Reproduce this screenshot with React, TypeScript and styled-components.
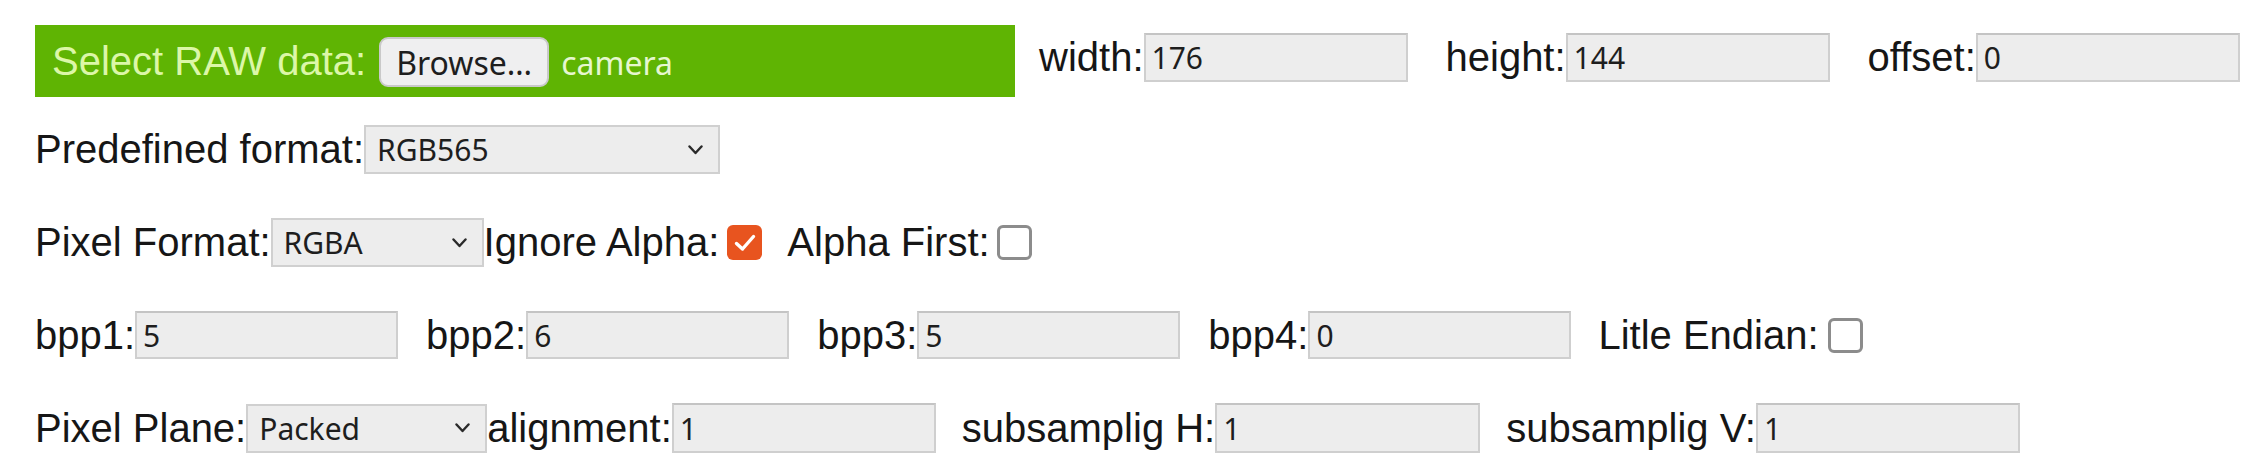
import React from "react";
import styled, { createGlobalStyle } from "styled-components";

const Global = createGlobalStyle`
  html, body { margin: 0; padding: 0; background: #ffffff; }
  body { font-family: "Liberation Sans", Arial, sans-serif; color: #161616; }
`;

const Page = styled.div`
  display: flex;
  flex-direction: column;
  padding: 25px 0 0 35px;
  width: 2243px;
  height: 466px;
  box-sizing: border-box;
  overflow: hidden;
`;

const Row = styled.div<{ $top?: number; $align?: string; $h: number }>`
  display: flex;
  align-items: ${(p) => p.$align || "center"};
  height: ${(p) => p.$h}px;
  margin-top: ${(p) => p.$top || 0}px;
  white-space: nowrap;
`;

const Uploader = styled.div`
  display: flex;
  align-items: center;
  width: 980px;
  height: 72px;
  box-sizing: border-box;
  padding-left: 17px;
  background: #5fb403;
`;

const UploadLabel = styled.span`
  font-size: 40px;
  color: #dcf7a8;
`;

const BrowseButton = styled.button`
  margin-left: 13px;
  width: 170px;
  height: 50px;
  margin-top: 2px;
  box-sizing: border-box;
  border: 2px solid #c9c9c9;
  border-radius: 9px;
  background: #efeff0;
  color: #1e1e1e;
  font-family: "Noto Sans", sans-serif;
  font-size: 32px;
  padding: 0;
`;

const FileName = styled.span`
  margin-left: 12px;
  margin-top: 2px;
  font-family: "Noto Sans", sans-serif;
  font-size: 32px;
  color: #e6f7cf;
`;

const Field = styled.div<{ $ml?: number; $mt?: number }>`
  display: flex;
  align-items: center;
  margin-left: ${(p) => p.$ml || 0}px;
  margin-top: ${(p) => p.$mt || 0}px;
`;

const Label = styled.span<{ $ml?: number }>`
  font-size: 40px;
  color: #161616;
  margin-left: ${(p) => p.$ml || 0}px;
`;

const TextInput = styled.input<{ $w: number; $h?: number }>`
  width: ${(p) => p.$w}px;
  height: ${(p) => p.$h || 49}px;
  box-sizing: border-box;
  border: 2px solid #cfcfcf;
  border-top-color: #c4c4c4;
  background: #ededed;
  padding: 0 0 0 6px;
  margin: 0;
  font-family: "Noto Sans", sans-serif;
  font-size: 30px;
  color: #1e1e1e;
  outline: none;
`;

const SelectBox = styled.div<{ $w: number }>`
  display: flex;
  align-items: center;
  justify-content: space-between;
  width: ${(p) => p.$w}px;
  height: 49px;
  box-sizing: border-box;
  border: 2px solid #d0d0d0;
  background: #ededed;
  padding: 0 15px 0 11px;
  font-family: "Noto Sans", sans-serif;
  font-size: 30px;
  color: #1e1e1e;
`;

const Box = styled.span<{ $checked?: boolean; $ml?: number }>`
  display: inline-flex;
  align-items: center;
  justify-content: center;
  box-sizing: border-box;
  width: 35px;
  height: 35px;
  margin-left: ${(p) => p.$ml || 8}px;
  border-radius: 6px;
  background: ${(p) => (p.$checked ? "#e8541f" : "#ffffff")};
  border: ${(p) => (p.$checked ? "none" : "3px solid #8c8c8c")};
`;

const Chevron = () => (
  <svg width="15" height="10" viewBox="0 0 15 10">
    <path d="M1.5 1.5 L7.5 8 L13.5 1.5" fill="none" stroke="#2a2a2a" strokeWidth="2.4" strokeLinecap="round" strokeLinejoin="round" />
  </svg>
);

const Check = ({ checked, ml }: { checked?: boolean; ml?: number }) => (
  <Box $checked={checked} $ml={ml}>
    {checked && (
      <svg width="24" height="20" viewBox="0 0 24 20">
        <path d="M3.5 10.5 L9.5 16 L20.5 3.5" fill="none" stroke="#ffffff" strokeWidth="3.4" strokeLinecap="round" strokeLinejoin="round" />
      </svg>
    )}
  </Box>
);

const Select = ({ value, w }: { value: string; w: number }) => (
  <SelectBox $w={w}>
    <span>{value}</span>
    <Chevron />
  </SelectBox>
);

export default function App() {
  return (
    <>
      <Global />
      <Page>
        <Row $h={72} $align="flex-start">
          <Uploader>
            <UploadLabel>Select RAW data:</UploadLabel>
            <BrowseButton>Browse…</BrowseButton>
            <FileName>camera</FileName>
          </Uploader>
          <Field $ml={24} $mt={8}>
            <Label>width:</Label>
            <TextInput $w={264} defaultValue="176" />
          </Field>
          <Field $ml={38} $mt={8}>
            <Label>height:</Label>
            <TextInput $w={264} defaultValue="144" />
          </Field>
          <Field $ml={38} $mt={8}>
            <Label>offset:</Label>
            <TextInput $w={264} defaultValue="0" />
          </Field>
        </Row>

        <Row $h={49} $top={28}>
          <Label>Predefined format:</Label>
          <Select value="RGB565" w={356} />
        </Row>

        <Row $h={49} $top={44}>
          <Label>Pixel Format:</Label>
          <Select value="RGBA" w={213} />
          <Label>Ignore Alpha:</Label>
          <Check checked ml={8} />
          <Label $ml={25}>Alpha First:</Label>
          <Check ml={7} />
        </Row>

        <Row $h={48} $top={44}>
          <Field>
            <Label>bpp1:</Label>
            <TextInput $w={263} $h={48} defaultValue="5" />
          </Field>
          <Field $ml={28}>
            <Label>bpp2:</Label>
            <TextInput $w={263} $h={48} defaultValue="6" />
          </Field>
          <Field $ml={28}>
            <Label>bpp3:</Label>
            <TextInput $w={263} $h={48} defaultValue="5" />
          </Field>
          <Field $ml={28}>
            <Label>bpp4:</Label>
            <TextInput $w={263} $h={48} defaultValue="0" />
          </Field>
          <Label $ml={27}>Litle Endian:</Label>
          <Check ml={9} />
        </Row>

        <Row $h={50} $top={44}>
          <Label>Pixel Plane:</Label>
          <Select value="Packed" w={241} />
          <Field>
            <Label>alignment:</Label>
            <TextInput $w={264} $h={50} defaultValue="1" />
          </Field>
          <Field $ml={26}>
            <Label>subsamplig H:</Label>
            <TextInput $w={265} $h={50} defaultValue="1" />
          </Field>
          <Field $ml={26}>
            <Label>subsamplig V:</Label>
            <TextInput $w={264} $h={50} defaultValue="1" />
          </Field>
        </Row>
      </Page>
    </>
  );
}
